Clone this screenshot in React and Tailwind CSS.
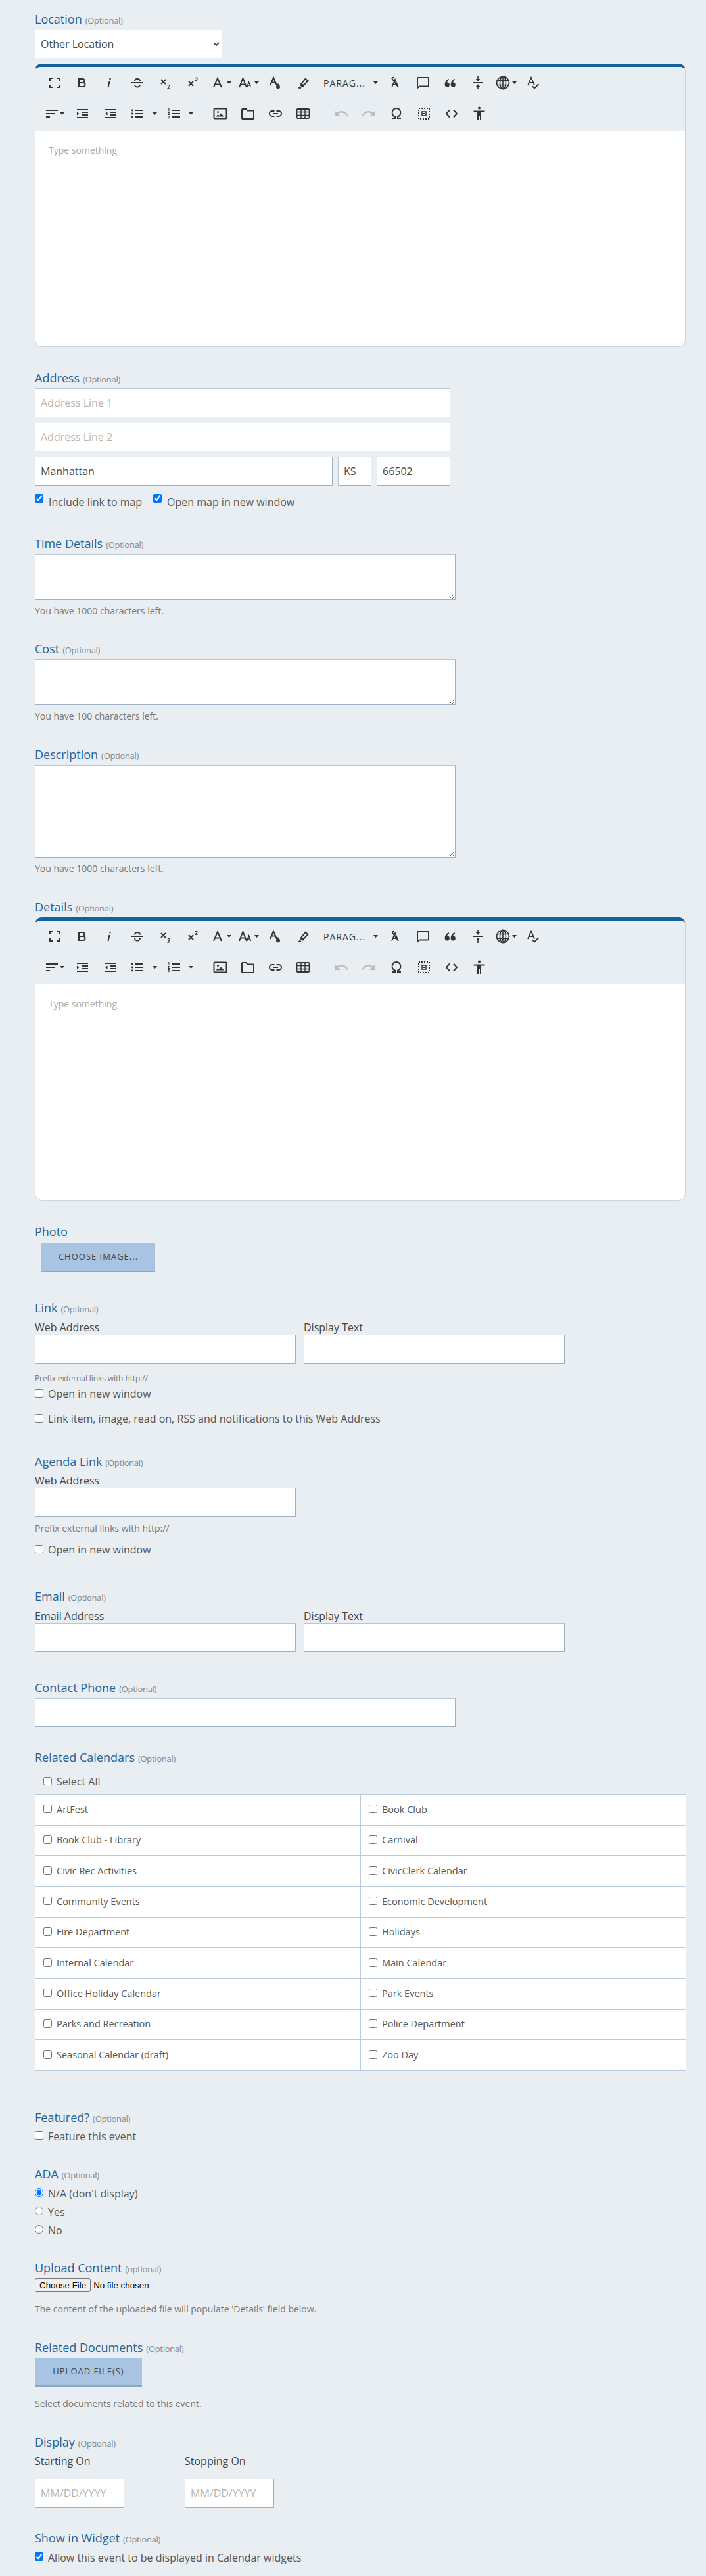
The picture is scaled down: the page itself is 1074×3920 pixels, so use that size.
import React from 'react';

const S = ({ children, fill }) => (
  <svg viewBox="0 0 24 24" className="w-6 h-6 shrink-0" fill={fill ? 'currentColor' : 'none'} stroke={fill ? 'none' : 'currentColor'} strokeWidth="2">
    {children}
  </svg>
);

const Caret = ({ ml = 'ml-[2px]' }) => (
  <svg viewBox="0 0 7 4" className={`w-[7px] h-1 shrink-0 text-[#333] ${ml}`} fill="currentColor"><path d="M0 0h7L3.5 4z" /></svg>
);

const icons = {
  fullscreen: <S><path d="M5 9V5h4M15 5h4v4M19 15v4h-4M9 19H5v-4" /></S>,
  bold: <S><path d="M7 6h5.500a3 3 0 0 1 0 6H7M7 12h6.500a3 3 0 0 1 0 6H7zM7 5v14" /></S>,
  italic: <S><path d="M12.500 10l-2 9" /><circle cx="13.500" cy="6" r="1.300" fill="currentColor" stroke="none" /></S>,
  strike: <S><path d="M3 12h18M8 9.500C8 7 10 6 12 6s4 1 4 3.500M8 15c0 2 2 3.500 4 3.500s4-1.500 4-3.500" /></S>,
  sub: <S><path d="M5 7l7 7M12 7l-7 7" /><path strokeWidth="1.300" d="M15 16.500c.5-1.200 3.200-1.200 3.200.5 0 1.200-2.200 2.200-3.200 3.800h3.500" /></S>,
  sup: <S><path d="M5 10l7 7M12 10l-7 7" /><path strokeWidth="1.300" d="M15 5c.5-1.200 3.200-1.200 3.200.5 0 1.200-2.200 2.200-3.200 3.800h3.500" /></S>,
  font: <S><path d="M6 19l6-14 6 14M8 14.500h8" /></S>,
  size: <S><path d="M3 19L8.500 5 14 19M5 14.500h7" /><path strokeWidth="1.600" d="M14.500 19l3-8 3 8M15.500 16h4" /></S>,
  color: <S><path d="M5 16L10 4l5 12M7 11.500h6" /><path fill="currentColor" stroke="none" d="M17 13c1.500 2.200 3 3.500 3 5.200a3 3 0 0 1-6 0c0-1.700 1.500-3 3-5.200z" /></S>,
  marker: <S><path d="M9.500 13.500L15.500 6l4 3-6.500 7z" /><path fill="currentColor" stroke="none" d="M8.500 13l5.500 4-1.500 1.500-3-.5-1.500-1.500zM4 20.500l3-3 2.500 2-1 1.500z" /></S>,
  clear: <S><path strokeWidth="1.800" d="M7 19l5-12 5 12M9 15h6M7 5l10 14" /><path strokeWidth="1.800" d="M8 4h3" /></S>,
  comment: <S><path d="M4 20V5.500A1.500 1.500 0 0 1 5.500 4h14A1.500 1.500 0 0 1 21 5.500V16a1.500 1.500 0 0 1-1.500 1.500H7z" /></S>,
  quote: <S fill><path d="M7.500 18.500a3.800 3.800 0 0 1-3.800-3.800c0-3.800 2.300-7 5.800-8.700l.8 1.200c-1.800 1.200-2.900 2.800-3.100 4.400a3.400 3.400 0 1 1 .3 6.900zM16.500 18.500a3.800 3.800 0 0 1-3.800-3.800c0-3.800 2.300-7 5.800-8.700l.8 1.200c-1.800 1.200-2.900 2.800-3.100 4.400a3.400 3.400 0 1 1 .3 6.900z" /></S>,
  hr: <S><path d="M4 12h16" /><path strokeWidth="1.600" d="M12 2v5M12 22v-5" /><path fill="currentColor" stroke="none" d="M8.800 6h6.400L12 10zM8.800 18h6.400L12 14z" /></S>,
  globe: <S><circle cx="12" cy="12" r="9.500" strokeWidth="1.800" /><ellipse cx="12" cy="12" rx="4.500" ry="9.500" strokeWidth="1.600" /><path strokeWidth="1.600" d="M12 2.500v19M3.200 8.500h17.600M3.200 15.500h17.600" /></S>,
  spell: <S><path strokeWidth="1.800" d="M4 16L9 4l5 12M5.800 12h6.400M11 17.500l3 3 6.500-6.500" /></S>,
  align: <S><path d="M5 7h18M5 12h13M5 17h6" /></S>,
  indent: <S><path d="M4 6h17M12 10h9M12 14h9M4 18h17" /><path fill="currentColor" stroke="none" d="M4 9.500L7.500 12 4 14.500z" /></S>,
  outdent: <S><path d="M4 6h17M12 10h9M12 14h9M4 18h17" /><path fill="currentColor" stroke="none" d="M8.500 9.500L5 12l3.500 2.500z" /></S>,
  ul: <S><path d="M8 7h13M8 12h13M8 17h13" /><circle cx="4.300" cy="7" r="1.400" fill="currentColor" stroke="none" /><circle cx="4.300" cy="12" r="1.400" fill="currentColor" stroke="none" /><circle cx="4.300" cy="17" r="1.400" fill="currentColor" stroke="none" /></S>,
  ol: <S><path d="M9 7h13M9 12h13M9 17h13" /><path strokeWidth="1" d="M4 5l1-.5v4M3.500 10.500h2.200l-2 3h2.300M3.500 15.500h2.200l-1.200 1.500c1 0 1.500.5 1.200 1.300-.2.600-1.500.7-2.200.2" /></S>,
  image: <S><rect x="2.500" y="4.500" width="19" height="15" rx="1" /><circle cx="8.500" cy="9.500" r="1.500" fill="currentColor" stroke="none" /><path fill="currentColor" stroke="none" d="M5.500 16.500l3-3.500 2 2 2.500-3.500 5 5z" /></S>,
  folder: <S><path d="M3 6a1 1 0 0 1 1-1h5.500l2 2.500H20a1 1 0 0 1 1 1V19a1 1 0 0 1-1 1H4a1 1 0 0 1-1-1z" /></S>,
  link: <S><path d="M10.500 8H7a4 4 0 0 0 0 8h3.500M13.500 8H17a4 4 0 0 1 0 8h-3.500M8 12h8" /></S>,
  table: <S><rect x="2.500" y="5" width="19" height="14" rx="1.500" strokeWidth="1.800" /><path strokeWidth="1.500" d="M2.500 9.500h19M2.500 14.500h19M9 5v14M15 5v14" /></S>,
  undo: <S fill><path d="M12.500 8c-2.650 0-5.050 1-6.900 2.600L2 7v9h9l-3.620-3.620c1.390-1.160 3.160-1.880 5.120-1.880 3.540 0 6.550 2.310 7.600 5.500l2.370-.78C21.080 11.030 17.150 8 12.500 8z" /></S>,
  redo: <S fill><path d="M18.400 10.600C16.550 9 14.150 8 11.500 8c-4.650 0-8.580 3.030-9.960 7.220L3.900 16c1.050-3.190 4.050-5.500 7.600-5.500 1.950 0 3.730.72 5.120 1.880L13 16h9V7l-3.600 3.600z" /></S>,
  omega: <S><path d="M5 19h5v-2.200a6.500 6.500 0 1 1 4 0V19h5" /></S>,
  select: <S><rect x="4" y="4" width="16" height="16" strokeDasharray="2 2" /><rect x="9" y="9" width="6" height="6" strokeWidth="1.500" /><rect x="11" y="11" width="2" height="2" fill="currentColor" stroke="none" /></S>,
  code: <S><path d="M9 6.500L4 12l5 5.500M15 6.500l5 5.500-5 5.500" /></S>,
  person: <S fill><circle cx="12" cy="3.500" r="2" /><path d="M3.500 7.500h17v2H15V22h-2v-7h-2v7H9V9.500H3.500z" /></S>,
};

// width = distance to the next icon's centre
const rowOne = [
  ['fullscreen', 42], ['bold', 41], ['italic', 43], ['strike', 43], ['sub', 42], ['sup', 37],
  ['font', 42, true], ['size', 45, true], ['color', 43], ['marker', 43],
];
const rowOneEnd = [
  ['clear', 42], ['comment', 42], ['quote', 42], ['hr', 38], ['globe', 46, true], ['spell', 24],
];
const rowTwo = [
  ['align', 48, true], ['indent', 42], ['outdent', 42], ['ul', 55, true], ['ol', 71, true], ['image', 42],
  ['folder', 42], ['link', 42], ['table', 58], ['undo', 42], ['redo', 42], ['omega', 42], ['select', 42],
  ['code', 42], ['person', 24],
];

const ToolButton = ({ name, w, caret }) => {
  const muted = name === 'undo' || name === 'redo';
  return (
    <div className={`flex items-center shrink-0 ${muted ? 'text-[#bdbdbd]' : 'text-[#333]'}`} style={{ width: w }}>
      {icons[name]}
      {caret && <Caret ml={name === 'ul' || name === 'ol' ? 'ml-[11px]' : 'ml-[2px]'} />}
    </div>
  );
};

const Editor = () => (
  <div className="w-[990px] h-[431px] border border-t-[5px] border-[#cdd5dd] border-t-[#14629c] rounded-[10px] bg-white overflow-hidden flex flex-col">
    <div className="bg-[#e9eef3] h-[97px] shrink-0 pt-[12px]">
      <div className="flex items-center h-6 pl-[17px]">
        {rowOne.map(([n, w, c]) => <ToolButton key={n} name={n} w={w} caret={c} />)}
        <div className="w-[97px] h-6 shrink-0 flex items-center text-[14px] tracking-[1px] text-[#333]">
          <span className="w-[76px]">PARAG...</span>
          <Caret ml="ml-[0px]" />
        </div>
        {rowOneEnd.map(([n, w, c]) => <ToolButton key={n} name={n} w={w} caret={c} />)}
      </div>
      <div className="flex items-center h-6 mt-[23px] pl-[11px]">
        {rowTwo.map(([n, w, c]) => <ToolButton key={n} name={n} w={w} caret={c} />)}
      </div>
    </div>
    <div className="pl-[20px] pt-[20px] text-[14px] leading-5 text-[#aaa]">Type something</div>
  </div>
);

const Label = ({ children, opt = '(Optional)', className = '' }) => (
  <div className={`h-[22px] leading-[22px] text-[18px] text-[#1f639b] ${className}`}>
    {children}
    {opt && <span className="ml-[5px] text-[13px] tracking-[-0.3px] text-[#808a94]">{opt}</span>}
  </div>
);

const boxCls = 'bg-white border border-[#b8c6d6] border-r-[#9fb0c2] border-b-[#9fb0c2] outline-none';
const inputCls = `block h-[44px] ${boxCls} px-2 text-[16px] text-[#4a4a4a] placeholder:text-[#b5b5b5]`;

const Help = ({ children, className = '' }) => (
  <div className={`h-5 leading-5 text-[14px] text-[#777] ${className}`}>{children}</div>
);

const Sub = ({ children, className = '' }) => (
  <div className={`h-5 leading-5 text-[16px] text-[#444] ${className}`}>{children}</div>
);

const Check = ({ label, checked, className = '', box = '-translate-y-[1px]', type = 'checkbox', name, size = 'text-[16px]' }) => (
  <label className={`flex items-center h-5 leading-5 text-[#555] ${size} ${className}`}>
    <input type={type} name={name} defaultChecked={checked} className={`w-[13px] h-[13px] m-0 mr-[7px] shrink-0 ${box}`} />
    {label}
  </label>
);

const TextBox = ({ h }) => (
  <textarea className={`block w-[640px] ${h} mt-[5px] ${boxCls}`} />
);

const Button = ({ children, className = '' }) => (
  <button className={`block h-[44px] bg-[#a8c4e2] border-b-2 border-b-[#8ea7c4] text-[13px] tracking-[1px] text-[#444] uppercase ${className}`}>{children}</button>
);

const calendars = [
  ['ArtFest', 'Book Club'],
  ['Book Club - Library', 'Carnival'],
  ['Civic Rec Activities', 'CivicClerk Calendar'],
  ['Community Events', 'Economic Development'],
  ['Fire Department', 'Holidays'],
  ['Internal Calendar', 'Main Calendar'],
  ['Office Holiday Calendar', 'Park Events'],
  ['Parks and Recreation', 'Police Department'],
  ['Seasonal Calendar (draft)', 'Zoo Day'],
];

export default function App() {
  return (
    <div className="min-h-[3920px] bg-[#e9eef3] pt-[18px] pl-[53px] pb-[19px] font-['Open_Sans',sans-serif]">
      <Label>Location</Label>
      <select className={`block w-[285px] h-[44px] mt-[5px] mb-[8px] ${boxCls} px-1 text-[16px] text-[#4a4a4a]`}>
        <option>Other Location</option>
      </select>
      <Editor />

      <Label className="mt-[36px]">Address</Label>
      <div className="w-[632px] mt-[5px] flex flex-col gap-2">
        <input className={`${inputCls} w-full`} placeholder="Address Line 1" />
        <input className={`${inputCls} w-full`} placeholder="Address Line 2" />
        <div className="flex gap-2">
          <input className={`${inputCls} w-[453px]`} defaultValue="Manhattan" />
          <input className={`${inputCls} w-[51px]`} defaultValue="KS" />
          <input className={`${inputCls} w-[112px]`} defaultValue="66502" />
        </div>
      </div>
      <div className="flex mt-[15px]">
        <Check label="Include link to map" checked className="w-[180px]" box="-translate-y-[6px] mr-[8px]" />
        <Check label="Open map in new window" checked box="-translate-y-[6px] mr-[8px]" />
      </div>

      <Label className="mt-[42px]">Time Details</Label>
      <TextBox h="h-[70px]" />
      <Help className="mt-[7px]">You have 1000 characters left.</Help>

      <Label className="mt-[36px]">Cost</Label>
      <TextBox h="h-[70px]" />
      <Help className="mt-[7px]">You have 100 characters left.</Help>

      <Label className="mt-[37px]">Description</Label>
      <TextBox h="h-[141px]" />
      <Help className="mt-[7px]">You have 1000 characters left.</Help>

      <Label className="mt-[37px]">Details</Label>
      <div className="mt-[5px]"><Editor /></div>

      <Label opt={null} className="mt-[36px]">Photo</Label>
      <Button className="w-[173px] ml-[10px] mt-[7px]">Choose Image...</Button>

      <Label className="mt-[43px]">Link</Label>
      <div className="flex gap-[12px] mt-[9px]">
        <div className="w-[397px]">
          <Sub>Web Address</Sub>
          <input className={`${inputCls} w-full mt-[1px]`} />
        </div>
        <div className="w-[397px]">
          <Sub>Display Text</Sub>
          <input className={`${inputCls} w-full mt-[1px]`} />
        </div>
      </div>
      <div className="h-4 leading-4 mt-[15px] text-[12px] tracking-[-0.1px] text-[#777]">Prefix external links with http://</div>
      <Check label="Open in new window" className="mt-[5px]" />
      <Check label="Link item, image, read on, RSS and notifications to this Web Address" className="mt-[18px]" />

      <Label className="mt-[44px]">Agenda Link</Label>
      <Sub className="mt-[8px]">Web Address</Sub>
      <input className={`${inputCls} w-[397px] mt-[1px]`} />
      <Help className="mt-[8px]">Prefix external links with http://</Help>
      <Check label="Open in new window" className="mt-[12px]" />

      <Label className="mt-[50px]">Email</Label>
      <div className="flex gap-[12px] mt-[9px]">
        <div className="w-[397px]">
          <Sub>Email Address</Sub>
          <input className={`${inputCls} w-full mt-[1px]`} />
        </div>
        <div className="w-[397px]">
          <Sub>Display Text</Sub>
          <input className={`${inputCls} w-full mt-[1px]`} />
        </div>
      </div>

      <Label className="mt-[43px]">Contact Phone</Label>
      <input className={`${inputCls} w-[640px] mt-[5px]`} />

      <Label className="mt-[35px]">Related Calendars</Label>
      <Check label="Select All" className="mt-[16px] pl-[13px]" />
      <table className="mt-[9px] w-[991px] border-collapse bg-white table-fixed">
        <tbody>
          {calendars.map(row => (
            <tr key={row[0]} className="h-[46.670px]">
              {row.map(name => (
                <td key={name} className="border border-[#bccbdb] pl-[12px] p-0">
                  <Check label={name} size="text-[14.500px]" />
                </td>
              ))}
            </tr>
          ))}
        </tbody>
      </table>

      <Label className="mt-[60px]">Featured?</Label>
      <Check label="Feature this event" className="mt-[8px]" />

      <Label className="mt-[36px]">ADA</Label>
      <Check type="radio" name="ada" label="N/A (don't display)" checked className="mt-[9px]" />
      <Check type="radio" name="ada" label="Yes" className="mt-[8px]" />
      <Check type="radio" name="ada" label="No" className="mt-[8px]" />

      <Label opt="(optional)" className="mt-[36px]">Upload Content</Label>
      <input type="file" className="block mt-[5px] h-[21px] font-['Liberation_Sans',sans-serif] text-[13.330px] text-black file:h-[21px] file:mr-[4px] file:px-[6px] file:border file:border-[#767676] file:rounded-[3px] file:bg-[#efefef]" />
      <Help className="mt-[16px]">The content of the uploaded file will populate 'Details' field below.</Help>

      <Label className="mt-[37px]">Related Documents</Label>
      <Button className="w-[163px] mt-[5px]">Upload File(s)</Button>
      <Help className="mt-[16px]">Select documents related to this event.</Help>

      <Label className="mt-[37px]">Display</Label>
      <div className="flex mt-[8px]">
        <div className="w-[228px]">
          <Sub>Starting On</Sub>
          <input className={`${inputCls} w-[136px] mt-[17px]`} placeholder="MM/DD/YYYY" />
        </div>
        <div>
          <Sub>Stopping On</Sub>
          <input className={`${inputCls} w-[136px] mt-[17px]`} placeholder="MM/DD/YYYY" />
        </div>
      </div>

      <Label className="mt-[35px]">Show in Widget</Label>
      <Check label="Allow this event to be displayed in Calendar widgets" checked className="mt-[9px]" />
    </div>
  );
}
